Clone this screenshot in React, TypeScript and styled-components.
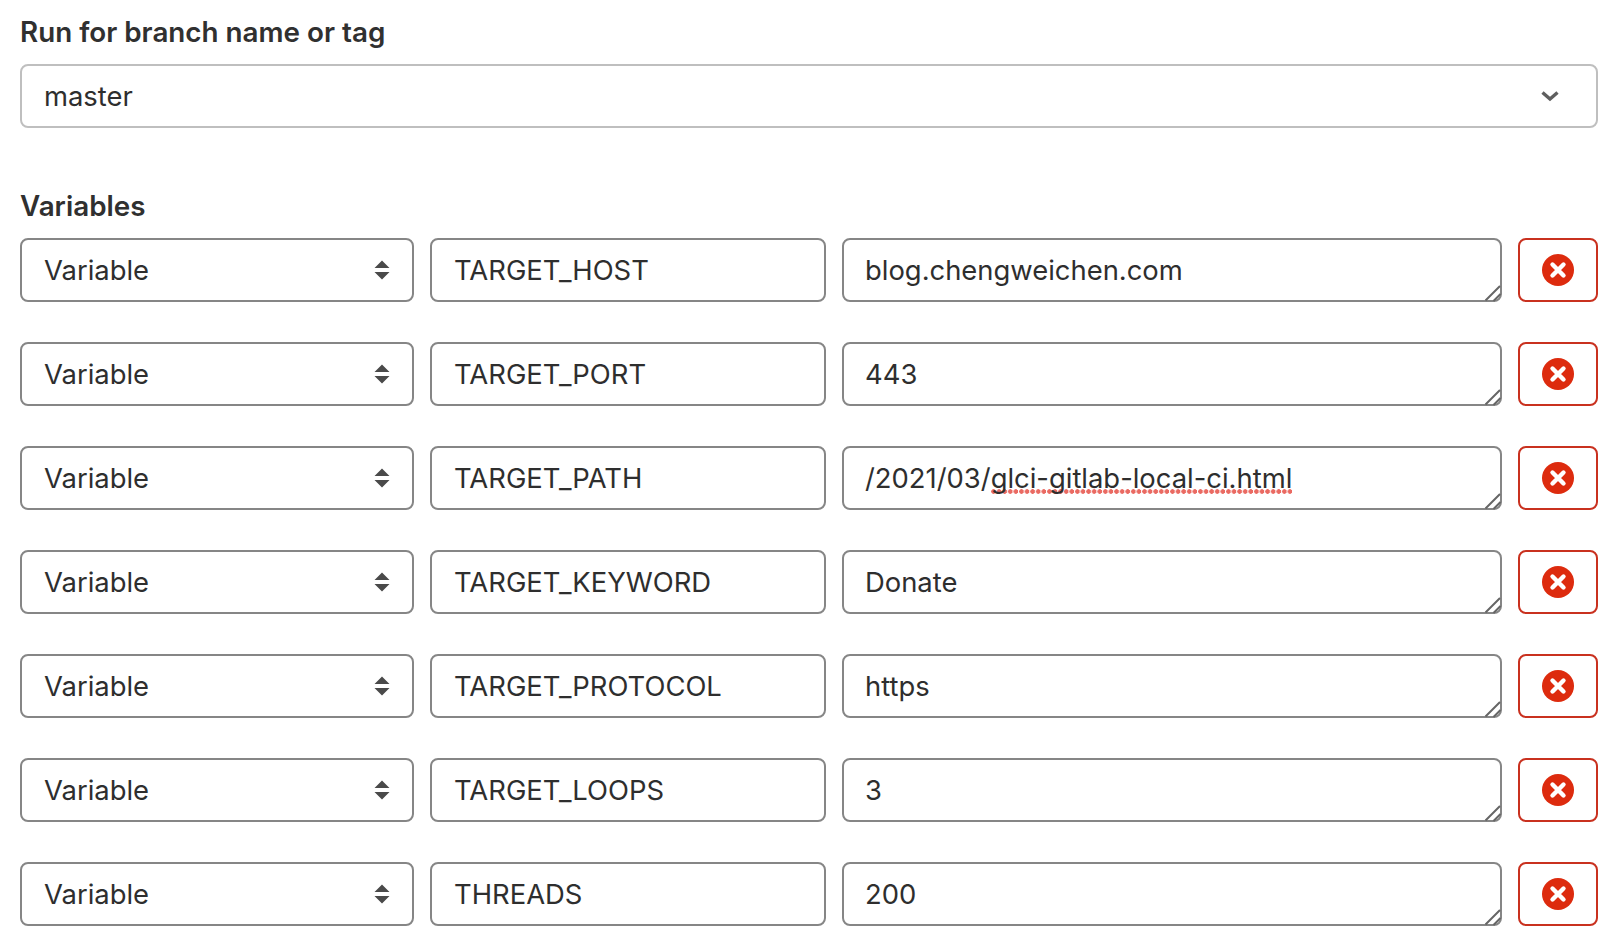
import React, { FC } from 'react';
import styled, { createGlobalStyle } from 'styled-components';

interface VariableRow {
  name: string;
  value: string;
  misspelt?: string;
}

const rows: VariableRow[] = [
  { name: 'TARGET_HOST', value: 'blog.chengweichen.com' },
  { name: 'TARGET_PORT', value: '443' },
  { name: 'TARGET_PATH', value: '/2021/03/', misspelt: 'glci-gitlab-local-ci.html' },
  { name: 'TARGET_KEYWORD', value: 'Donate' },
  { name: 'TARGET_PROTOCOL', value: 'https' },
  { name: 'TARGET_LOOPS', value: '3' },
  { name: 'THREADS', value: '200' },
];

const GlobalStyle = createGlobalStyle`
  html, body {
    margin: 0;
    padding: 0;
    background: #fff;
    overflow: hidden;
  }
`;

const Page = styled.div`
  width: 1610px;
  height: 948px;
  box-sizing: border-box;
  padding: 14px 12px 0 20px;
  font-family: Inter, 'Noto Sans', sans-serif;
  font-size: 27.4px;
  color: #2e2e2e;
  overflow: hidden;
`;

const Label = styled.div`
  font-weight: 600;
  font-size: 27.8px;
  line-height: 36px;
  color: #303030;
`;

const BranchField = styled.div`
  display: flex;
  align-items: center;
  justify-content: space-between;
  box-sizing: border-box;
  height: 64px;
  margin: 14px 0 60px;
  padding: 0 37px 0 22px;
  border: 2px solid #bfbfbf;
  border-radius: 8px;
`;

const Rows = styled.div`
  display: flex;
  flex-direction: column;
  gap: 40px;
  margin-top: 14px;
`;

const Row = styled.div`
  display: grid;
  grid-template-columns: 394px 396px 660px 80px;
  gap: 16px;
`;

const Field = styled.div`
  position: relative;
  display: flex;
  align-items: center;
  justify-content: space-between;
  box-sizing: border-box;
  height: 64px;
  padding: 0 22px;
  border: 2px solid #868686;
  border-radius: 8px;
  white-space: nowrap;
`;

const ValueField = styled(Field)`
  padding-left: 21px;
`;

const Misspelt = styled.span`
  background-image: radial-gradient(circle at 2.5px 2.5px, #ea6a62 2px, transparent 2.6px);
  background-size: 5.6px 5px;
  background-position: left calc(100% - 1px);
  background-repeat: repeat-x;
`;

const ResizeHandle = styled.svg`
  position: absolute;
  right: -2px;
  bottom: -2px;
`;

const RemoveButton = styled.div`
  display: flex;
  align-items: center;
  justify-content: center;
  box-sizing: border-box;
  height: 64px;
  border: 2px solid #c9311f;
  border-radius: 8px;
`;

const ChevronDown: FC = () => (
  <svg width="18" height="12" viewBox="0 0 18 12">
    <path d="M1.5 2.5 9 9l7.5-6.5" fill="none" stroke="#5f5f5f" strokeWidth="3.4" />
  </svg>
);

const UpDown: FC = () => (
  <svg width="16" height="20" viewBox="0 0 16 20">
    <path d="M8 0.5 15.5 8H0.5zM8 19.5 0.5 12h15z" fill="#4a4a4a" />
  </svg>
);

const RemoveIcon: FC = () => (
  <svg width="32" height="32" viewBox="0 0 32 32">
    <circle cx="16" cy="16" r="16" fill="#dd2b0e" />
    <path d="M10.5 10.5l11 11M21.5 10.5l-11 11" stroke="#fff" strokeWidth="4.4" strokeLinecap="round" />
  </svg>
);

const Handle: FC = () => (
  <ResizeHandle width="18" height="18" viewBox="0 0 18 18">
    <path d="M1.5 16.5 16 2M9.5 17 16.5 10" fill="none" stroke="#666" strokeWidth="2" />
  </ResizeHandle>
);

const App: FC = () => (
  <Page>
    <GlobalStyle />
    <Label>Run for branch name or tag</Label>
    <BranchField>
      master
      <ChevronDown />
    </BranchField>
    <Label>Variables</Label>
    <Rows>
      {rows.map((row) => (
        <Row key={row.name}>
          <Field>
            Variable
            <UpDown />
          </Field>
          <Field>{row.name}</Field>
          <ValueField>
            <span>
              {row.value}
              {row.misspelt && <Misspelt>{row.misspelt}</Misspelt>}
            </span>
            <Handle />
          </ValueField>
          <RemoveButton>
            <RemoveIcon />
          </RemoveButton>
        </Row>
      ))}
    </Rows>
  </Page>
);

export default App;
